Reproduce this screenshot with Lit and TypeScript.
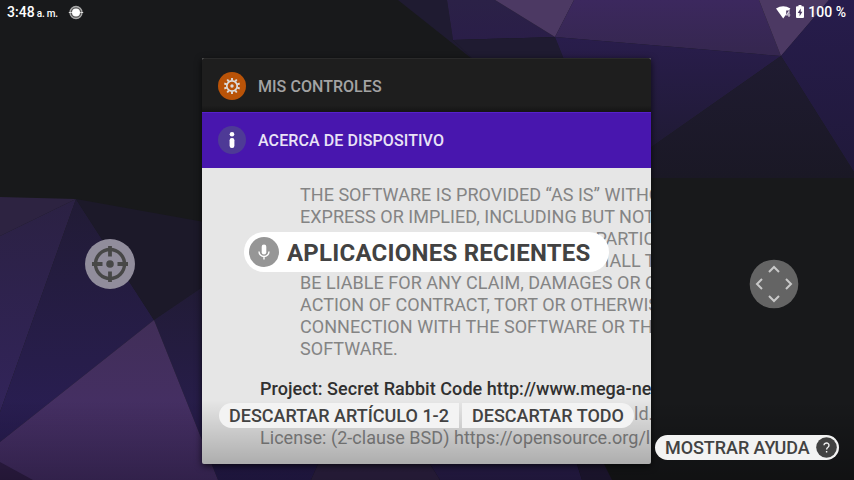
import { LitElement, html, svg, css } from "lit";
import { customElement } from "lit/decorators.js";

const FACETS: [string, string][] = [
  ["398,0 447,0 453,40 472,58 476,62", "#1f1b31"],
  ["447,0 495,0 555,37 453,40", "url(#g-mid)"],
  ["495,0 574,0 555,37", "#4c3963"],
  ["574,0 759,0 781,56 555,37", "url(#g-top)"],
  ["453,40 555,37 565,62 476,62", "#1f1b31"],
  ["555,37 781,56 640,155 565,62", "url(#g-side)"],
  ["759,0 829,0 781,56", "#4c3963"],
  ["829,0 854,0 854,172 781,56", "url(#g-right)"],
  ["781,56 854,172 854,178 640,178 640,155", "url(#g-dusk)"],
  ["0,197 76,199 0,236", "#2d2341"],
  ["76,199 0,236 0,412", "url(#g-left)"],
  ["76,199 154,320 0,442 0,412", "url(#g-deep)"],
  ["76,199 210,223 210,282 154,320", "#1c1929"],
  ["154,320 210,282 318,464 311,480 218,480", "url(#g-deep)"],
  ["154,320 218,480 0,480 0,442", "url(#g-violet)"],
  ["0,462 33,480 0,480", "#33204d"],
  ["318,464 430,464 440,480 311,480", "#33254b"],
  ["430,464 577,464 582,480 440,480", "#2d2053"],
  ["577,464 604,464 612,480 582,480", "#241b3b"],
];

const LICENSE = [
  "THE SOFTWARE IS PROVIDED “AS IS” WITHOUT",
  "EXPRESS OR IMPLIED, INCLUDING BUT NOT LIMITED",
  "MERCHANTABILITY, FITNESS FOR A PARTICULAR",
  "NONINFRINGEMENT. IN NO EVENT SHALL THE",
  "BE LIABLE FOR ANY CLAIM, DAMAGES OR OTHER",
  "ACTION OF CONTRACT, TORT OR OTHERWISE",
  "CONNECTION WITH THE SOFTWARE OR THE USE",
  "SOFTWARE.",
];

const grad = (id: string, a: string, b: string) => svg`
  <linearGradient id=${id} x1="0" y1="0" x2="0" y2="1">
    <stop offset="0" stop-color=${a} /><stop offset="1" stop-color=${b} />
  </linearGradient>`;

@customElement("app-root")
export class AppRoot extends LitElement {
  static styles = css`
    :host { display: block; position: relative; width: 854px; height: 480px; overflow: hidden;
      background: #18191b; font-family: Roboto, "Noto Sans", sans-serif; }
    svg { display: block; flex: none; }
    .wall, .shade { position: absolute; inset: 0; }
    .shade { top: 400px; background: linear-gradient(rgba(0,0,0,0), rgba(0,0,0,.31)); }
    .status { position: relative; display: flex; align-items: center; height: 24px; padding: 0 8px 0 7px;
      color: #fff; font-weight: 500; font-size: 14px; white-space: pre; }
    .clock { display: flex; align-items: baseline; gap: 2px; width: 61px; letter-spacing: .05px; }
    .clock small { font-size: 10px; letter-spacing: -.2px; }
    .spacer { flex: 1; }
    .wifi { margin-right: 5px; }
    .bat { margin-right: 4px; }
    .card { position: relative; margin: 34px 0 0 202px; width: 449px; height: 406px; overflow: hidden;
      border-radius: 2px; background: #e6e6e6; }
    .halo { position: absolute; left: 202px; top: 58px; width: 449px; height: 406px; border-radius: 2px;
      box-shadow: 0 2px 7px rgba(0,0,0,.7); }
    .head { display: flex; align-items: center; gap: 12px; padding-left: 16px; box-sizing: border-box;
      font-size: 16px; font-weight: 500; }
    .head svg { margin-top: -1px; }
    .head.dark { height: 54px; padding-top: 2px; background: linear-gradient(#1e1e1e 88%, #141414); color: #a3a3a3;
      border-top: 1px solid #2a2a2a; letter-spacing: .05px; }
    .head.violet { height: 56px; background: #4816ae; color: #e9e3f6; border-top: 1px solid #5621cb;
      letter-spacing: .1px; }
    .legal { padding: 16px 0 0 98px; font-size: 18px; line-height: 22px; color: #848484; white-space: nowrap;
      letter-spacing: .03px; }
    .project { padding: 17px 0 0 58px; font-size: 18px; line-height: 24.5px; color: #848484; white-space: nowrap;
      letter-spacing: .035px; }
    .project b { display: block; font-weight: 500; color: #303030; letter-spacing: .05px; }
    .copy { display: flex; }
    .copy span { flex: none; }
    .copy span:first-child { width: 374px; overflow: hidden; }
    .title { position: absolute; left: 244px; top: 232px; width: 365px; height: 40px; border-radius: 20px;
      background: #fff; display: flex; align-items: center; gap: 8px; padding-left: 5px; box-sizing: border-box;
      font-size: 24px; font-weight: 700; color: #424242; white-space: nowrap; letter-spacing: .23px; }
    .title span { padding-top: 2px; }
    .actions { position: absolute; left: 219px; top: 403px; display: flex; gap: 3px; }
    .pill { display: flex; align-items: center; height: 25px; box-sizing: border-box; background: #f3f3f3;
      color: #424242; font-size: 18px; font-weight: 500; white-space: nowrap; padding-left: 10px; }
    .first { width: 240px; border-radius: 12.5px 0 0 12.5px; }
    .last { width: 172px; border-radius: 0 12.5px 12.5px 0; }
    .help { position: absolute; left: 655px; top: 435px; width: 184px; border-radius: 12.5px;
      justify-content: space-between; padding-right: 2px; letter-spacing: -.06px; }
    .aim { position: absolute; left: 85px; top: 239px; }
    .pad { position: absolute; left: 749px; top: 259px; }
  `;

  render() {
    return html`
      <svg class="wall" width="854" height="480" viewBox="0 0 854 480">
        <defs>
          ${grad("g-mid", "#2b2147", "#2a1e48")}${grad("g-top", "#3c285e", "#35274f")}
          ${grad("g-side", "#291d4c", "#1f1a33")}${grad("g-right", "#271c4c", "#20193a")}
          ${grad("g-dusk", "#1f1b31", "#1a1825")}${grad("g-left", "#2b2143", "#32245a")}
          ${grad("g-deep", "#211b35", "#2a1e55")}${grad("g-violet", "#412e58", "#48306c")}
        </defs>
        ${FACETS.map(([p, f]) => svg`<polygon points=${p} fill=${f} />`)}
      </svg>
      <div class="halo"></div>
      <div class="status">
        <span class="clock"><span>3:48</span><small>a. m.</small></span>
        <svg width="16" height="16" viewBox="0 0 16 16">
          <circle cx="8" cy="8.500" r="6" fill="#555" stroke="#aaa" stroke-width="1.3" />
          <path d="M.8 8.500h3M12.2 8.500h3" stroke="#ddd" stroke-width="1.2" />
          <circle cx="8" cy="8.500" r="4" fill="#fff" />
        </svg>
        <span class="spacer"></span>
        <svg class="wifi" width="15" height="13" viewBox="0 0 15 13">
          <path d="M0 2.600Q7.200-2 14.400 2.600L7.200 12.500z" fill="#fff" />
          <path d="M10.200 4.500h4.800v7h-4.800z" fill="#493761" />
          <path d="M13 11V5.300L10.500 9h3.800" fill="none" stroke="#d8d2df" stroke-width="1.100" />
        </svg>
        <svg class="bat" width="8" height="14" viewBox="0 0 8 14">
          <path d="M2.500 0h3v1.300H7q1 0 1 1V12q0 1-1 1H1q-1 0-1-1V2.300q0-1 1-1h1.500z" fill="#fff" />
          <path d="M4.700 3.500L1.700 8h1.900v3.300L6.400 6.700H4.700z" fill="#493761" />
        </svg>
        <span>100 %</span>
      </div>
      <div class="card">
        <div class="head dark">
          <svg width="28" height="28" viewBox="-14 -14 28 28">
            <circle r="14" fill="#b95308" />
            <g fill="none" stroke="#dcdcdc">
              <circle r="5.200" stroke-width="1.700" />
              ${[0, 36, 72, 108, 144, 180, 216, 252, 288, 324].map(
                (a) => svg`<path d="M0-5.500V-8.100" stroke-width="1.900" transform="rotate(${a})" />`
              )}
            </g>
            <circle r="1.700" fill="#dcdcdc" />
          </svg>
          <span>MIS CONTROLES</span>
        </div>
        <div class="head violet">
          <svg width="28" height="28" viewBox="0 0 28 28">
            <circle cx="14" cy="14" r="14" fill="#4e3a96" />
            <circle cx="14" cy="8.300" r="2.300" fill="#fff" />
            <rect x="11.600" y="12" width="4.800" height="10" rx="2.200" fill="#fff" />
          </svg>
          <span>ACERCA DE DISPOSITIVO</span>
        </div>
        <div class="legal">${LICENSE.map((l) => html`<div>${l}</div>`)}</div>
        <div class="project">
          <b>Project: Secret Rabbit Code http://www.mega-nerd.com</b>
          <div class="copy"><span>Copyright (c) 2012-2016, Erik</span><span>ld.com</span></div>
          <div>License: (2-clause BSD) https://opensource.org/licenses</div>
        </div>
      </div>
      <div class="shade"></div>
      <div class="title">
        <svg width="30" height="30" viewBox="0 0 30 30">
          <circle cx="15" cy="15" r="15" fill="#969696" />
          <rect x="12.700" y="7.500" width="4.600" height="10" rx="2.300" fill="#fff" />
          <path d="M10 14.500a5 5 0 0 0 10 0M15 19.500v3" fill="none" stroke="#fff" stroke-width="1.400" />
        </svg>
        <span>APLICACIONES RECIENTES</span>
      </div>
      <div class="actions">
        <div class="pill first">DESCARTAR ARTÍCULO 1-2</div>
        <div class="pill last">DESCARTAR TODO</div>
      </div>
      <div class="pill help">
        <span>MOSTRAR AYUDA</span>
        <svg width="21" height="21" viewBox="0 0 21 21">
          <circle cx="10.500" cy="10.500" r="10.300" fill="#424242" />
          <path d="M8 8.300a2.500 2.300 0 1 1 4.200 1.700Q10.600 11 10.600 12.500M10.600 14v1.600" fill="none" stroke="#f3f3f3" stroke-width="1.400" />
        </svg>
      </div>
      <svg class="aim" width="50" height="50" viewBox="-25 -25 50 50">
        <circle r="25" fill="#918d9c" />
        <g fill="none" stroke="#474747">
          <circle r="14.500" stroke-width="3.400" />
          <path d="M0-18V-7.500M0 18V7.500M-18 0H-7.500M18 0H7.500" stroke-width="3.800" />
        </g>
        <circle r="3.800" fill="#474747" />
      </svg>
      <svg class="pad" width="50" height="50" viewBox="-25 -25 50 50">
        <circle r="24.300" fill="#646464" />
        <path d="M-5-12L0-17L5-12M-5 12L0 17L5 12M-12-5L-17 0L-12 5M12-5L17 0L12 5" fill="none" stroke="#c9c9c9" stroke-width="2" />
      </svg>
    `;
  }
}
